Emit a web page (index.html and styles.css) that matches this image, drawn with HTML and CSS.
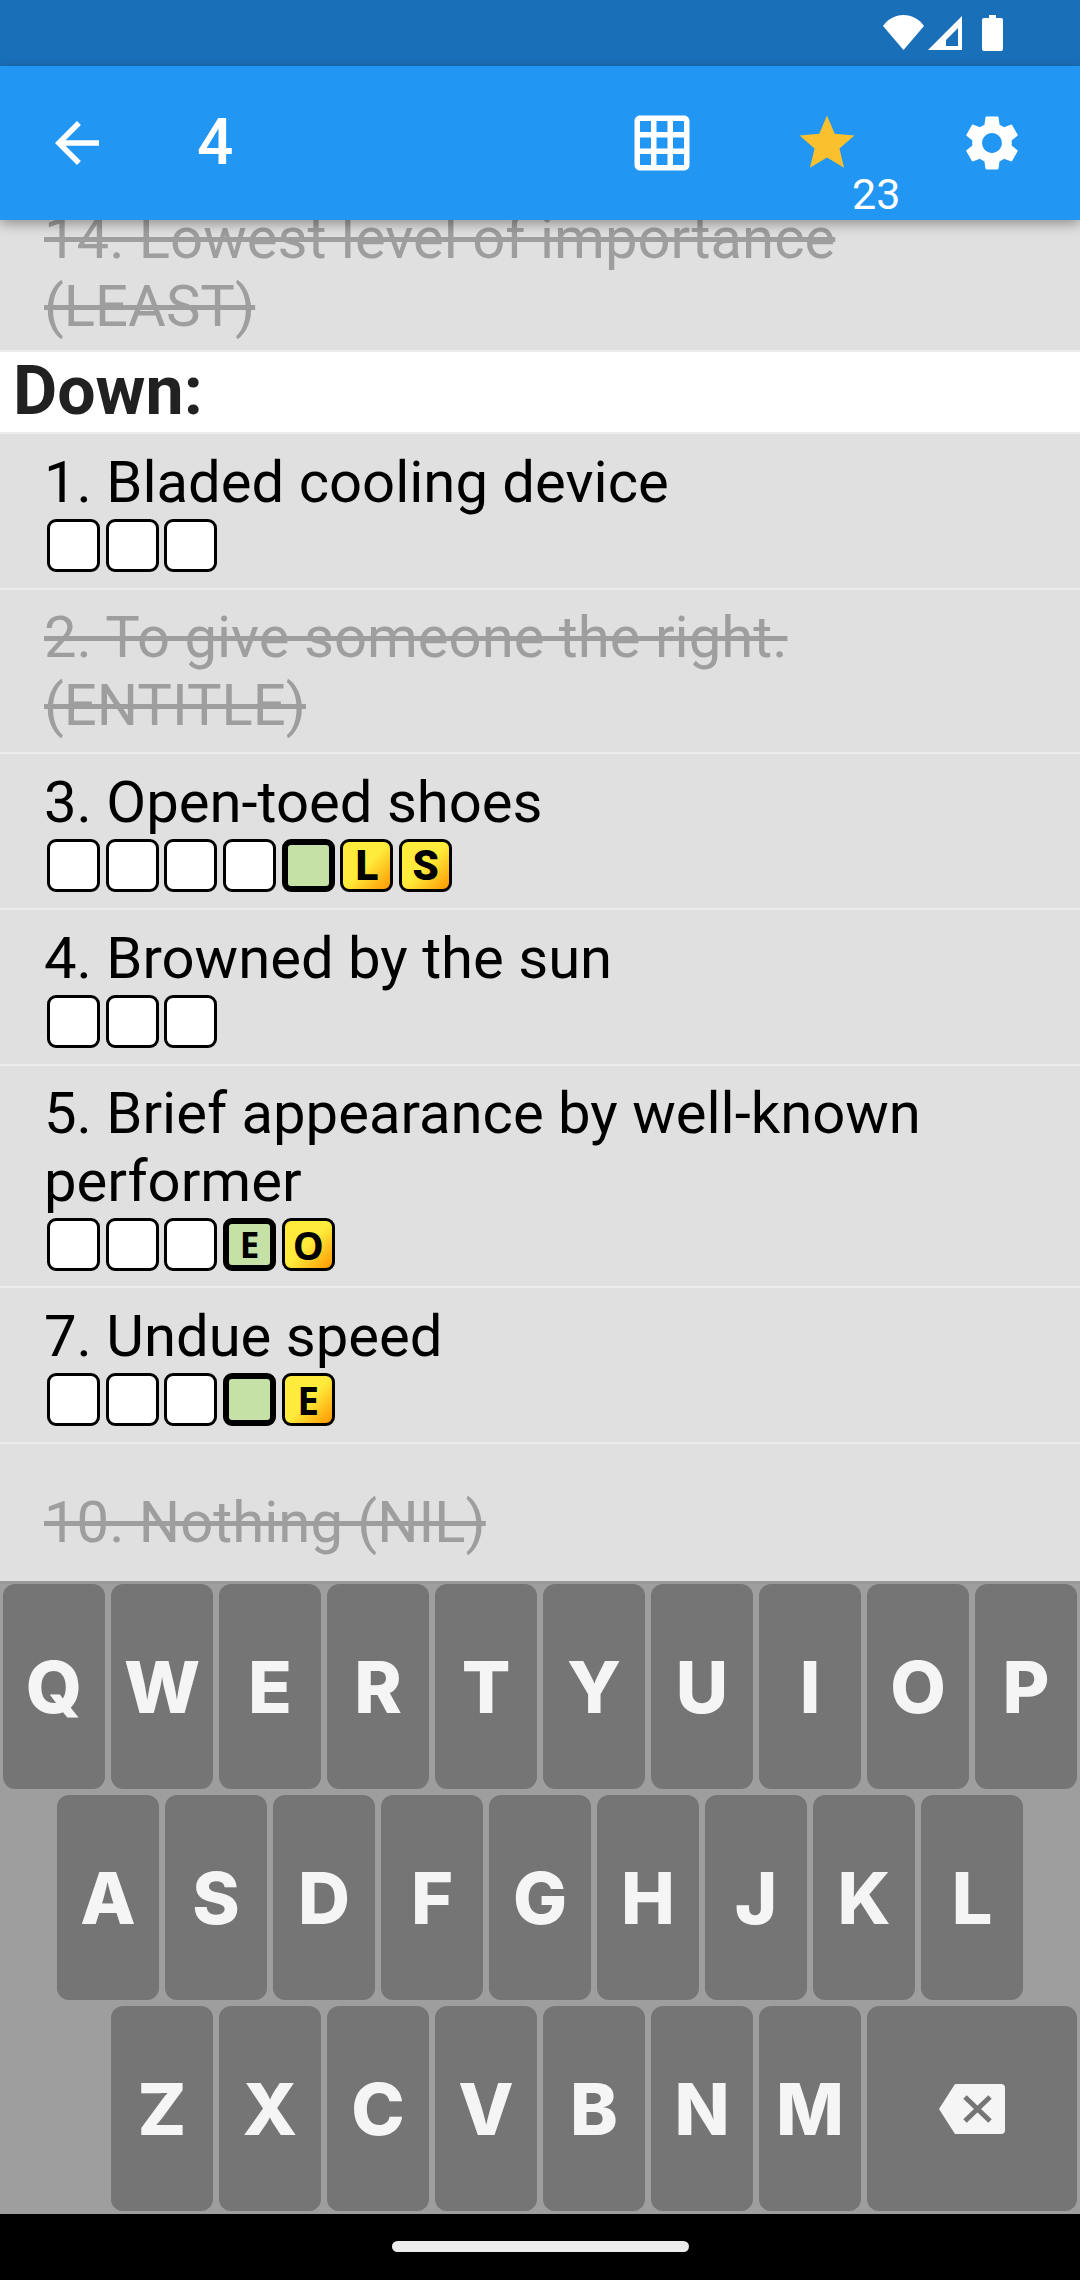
FILE: index.html
```html
<!DOCTYPE html>
<html lang="en">
<head>
    <meta charset="UTF-8">
    <meta name="viewport" content="width=device-width, initial-scale=1.0">
    <title>Crossword</title>
    <link rel="stylesheet" href="styles.css">
</head>
<body>

<div class="status-bar">
    <svg class="status-wifi" viewBox="0 0 41 35"><path d="M0 11C5 4 12 0 20.500 0S36 4 41 11L20.500 35Z"/></svg>
    <svg class="status-signal" viewBox="0 0 34 34"><path fill-rule="evenodd" d="M34 0V34H0ZM30 12L18 24V30H30Z"/></svg>
    <svg class="status-battery" viewBox="0 0 21 36"><path d="M7 0H14V3H19Q21 3 21 5V34Q21 36 19 36H2Q0 36 0 34V5Q0 3 2 3H7Z"/></svg>
</div>

<div class="app-bar">
    <div class="back-button">
        <svg class="icon" viewBox="0 0 24 24"><path d="M20 11H7.830l5.590-5.590L12 4l-8 8 8 8 1.410-1.410L7.830 13H20v-2z"/></svg>
    </div>
    <div class="app-title">4</div>
    <div class="action">
        <svg class="icon" viewBox="0 0 24 24"><path d="M20 2H4c-1.100 0-2 .9-2 2v16c0 1.100.9 2 2 2h16c1.100 0 2-.9 2-2V4c0-1.100-.9-2-2-2zM8 20H4v-4h4v4zm0-6H4v-4h4v4zm0-6H4V4h4v4zm6 12h-4v-4h4v4zm0-6h-4v-4h4v4zm0-6h-4V4h4v4zm6 12h-4v-4h4v4zm0-6h-4v-4h4v4zm0-6h-4V4h4v4z"/></svg>
    </div>
    <div class="action">
        <svg class="icon star" viewBox="0 0 24 24"><path d="M12 17.270L18.180 21l-1.640-7.030L22 9.240l-7.190-.61L12 2 9.190 8.630 2 9.240l5.460 4.730L5.820 21z"/></svg>
        <span class="badge">23</span>
    </div>
    <div class="action">
        <svg class="icon" viewBox="0 0 24 24"><path d="M19.140 12.940c.04-.3.060-.61.060-.94 0-.32-.02-.64-.07-.94l2.030-1.580c.18-.14.230-.41.120-.61l-1.920-3.320c-.12-.22-.37-.29-.59-.22l-2.390.96c-.5-.38-1.030-.7-1.620-.94l-.36-2.540c-.04-.24-.24-.41-.48-.41h-3.840c-.24 0-.43.170-.47.410l-.36 2.540c-.59.240-1.130.570-1.620.94l-2.390-.96c-.22-.08-.47 0-.59.220L2.740 8.870c-.12.210-.08.470.12.610l2.030 1.580c-.05.3-.09.630-.09.940s.02.640.07.940l-2.030 1.580c-.18.140-.23.410-.12.610l1.920 3.320c.12.220.37.290.59.220l2.390-.96c.5.380 1.030.7 1.620.94l.36 2.540c.05.240.24.410.48.410h3.840c.24 0 .44-.17.47-.41l.36-2.540c.59-.24 1.130-.56 1.620-.94l2.390.96c.22.080.47 0 .59-.22l1.920-3.320c.12-.22.070-.47-.12-.61l-2.010-1.580zM12 15.600c-1.980 0-3.600-1.620-3.600-3.600s1.620-3.600 3.600-3.600 3.600 1.620 3.600 3.600-1.620 3.600-3.600 3.600z"/></svg>
    </div>
</div>

<div class="clue-list">
    <div class="clue clue-clipped done"><span>14. Lowest level of importance<br>(LEAST)</span></div>
    <div class="section-title">Down:</div>

    <div class="clue">
        <div class="clue-text">1. Bladed cooling device</div>
        <div class="tiles">
            <div class="tile"></div><div class="tile"></div><div class="tile"></div>
        </div>
    </div>

    <div class="clue done"><span>2. To give someone the right.<br>(ENTITLE)</span></div>

    <div class="clue">
        <div class="clue-text">3. Open-toed shoes</div>
        <div class="tiles">
            <div class="tile"></div><div class="tile"></div><div class="tile"></div><div class="tile"></div>
            <div class="tile green"></div>
            <div class="tile yellow large">L</div>
            <div class="tile yellow large">S</div>
        </div>
    </div>

    <div class="clue">
        <div class="clue-text">4. Browned by the sun</div>
        <div class="tiles">
            <div class="tile"></div><div class="tile"></div><div class="tile"></div>
        </div>
    </div>

    <div class="clue clue-long">
        <div class="clue-text">5. Brief appearance by well-known performer</div>
        <div class="tiles">
            <div class="tile"></div><div class="tile"></div><div class="tile"></div>
            <div class="tile green">E</div>
            <div class="tile yellow">O</div>
        </div>
    </div>

    <div class="clue">
        <div class="clue-text">7. Undue speed</div>
        <div class="tiles">
            <div class="tile"></div><div class="tile"></div><div class="tile"></div>
            <div class="tile green"></div>
            <div class="tile yellow">E</div>
        </div>
    </div>

    <div class="clue clue-last done"><span>10. Nothing (NIL)</span></div>
</div>

<div class="keyboard">
    <div class="key-row">
        <div class="key">Q</div><div class="key">W</div><div class="key">E</div><div class="key">R</div><div class="key">T</div>
        <div class="key">Y</div><div class="key">U</div><div class="key">I</div><div class="key">O</div><div class="key">P</div>
    </div>
    <div class="key-row row-two">
        <div class="key">A</div><div class="key">S</div><div class="key">D</div><div class="key">F</div><div class="key">G</div>
        <div class="key">H</div><div class="key">J</div><div class="key">K</div><div class="key">L</div>
    </div>
    <div class="key-row row-three">
        <div class="key">Z</div><div class="key">X</div><div class="key">C</div><div class="key">V</div>
        <div class="key">B</div><div class="key">N</div><div class="key">M</div>
        <div class="key key-back">
            <svg class="back-icon" viewBox="0 0 66 50">
                <path class="back-shape" d="M16 0H62Q66 0 66 4V46Q66 50 62 50H16L0 25Z"/>
                <path class="back-cross" d="M26 13L51 37M51 13L26 37"/>
            </svg>
        </div>
    </div>
</div>

<div class="nav-bar"><div class="home-pill"></div></div>

</body>
</html>
```

FILE: styles.css
```css
* {
    box-sizing: border-box;
}

body {
    margin: 0;
    width: 1080px;
    height: 2280px;
    overflow: hidden;
    font-family: Roboto, sans-serif;
    background-color: #e0e0e0;
}

.status-bar {
    height: 66px;
    background-color: #1a6fb9;
    display: flex;
    align-items: flex-start;
    padding: 15px 0 0 883px;
}

.status-bar svg {
    fill: #fff;
    display: block;
}

.status-wifi {
    width: 41px;
    height: 35px;
}

.status-signal {
    width: 34px;
    height: 34px;
    margin: 1px 0 0 4px;
}

.status-battery {
    width: 21px;
    height: 36px;
    margin-left: 20px;
}

.app-bar {
    position: relative;
    z-index: 2;
    height: 154px;
    background-color: #2196f3;
    box-shadow: 0 4px 12px rgba(0, 0, 0, 0.35);
    display: flex;
    align-items: center;
    padding-right: 6px;
    color: #fff;
}

.icon {
    width: 66px;
    height: 66px;
    fill: #fff;
    display: block;
}

.icon.star {
    fill: #fbc02d;
}

.back-button {
    width: 197px;
    padding-left: 44px;
}

.app-title {
    flex: 1;
    font-size: 64px;
    font-weight: 500;
    line-height: 66px;
}

.action {
    position: relative;
    width: 165px;
    display: flex;
    justify-content: center;
}

.badge {
    position: absolute;
    left: 108px;
    top: 58px;
    font-size: 43px;
    line-height: 52px;
}

.clue-list {
    height: 1361px;
    overflow: hidden;
}

.clue {
    padding: 14px 40px 16px 44px;
    border-bottom: 2px solid #ececec;
    font-size: 58px;
    line-height: 68px;
    color: #000;
}

.clue.done {
    padding-top: 13px;
    padding-bottom: 13px;
    color: #9e9e9e;
}

.clue.done span {
    text-decoration: line-through;
}

.clue.clue-clipped {
    height: 132px;
    padding: 0 0 10px 44px;
    display: flex;
    align-items: flex-end;
}

.clue.clue-long {
    padding-top: 13px;
    padding-bottom: 15px;
}

.clue.clue-last {
    height: 137px;
    padding-top: 44px;
    border-bottom: none;
}

.section-title {
    height: 82px;
    background-color: #fff;
    border-bottom: 2px solid #ececec;
    padding-left: 13px;
    font-size: 68px;
    font-weight: 700;
    line-height: 78px;
    color: #212121;
}

.tiles {
    display: flex;
    gap: 5.700px;
    margin: 3px 0 0 3px;
}

.tile {
    width: 53px;
    height: 53px;
    border: 3px solid #000;
    border-radius: 9px;
    background-color: #fff;
    display: flex;
    align-items: center;
    justify-content: center;
    font-family: "Open Sans", sans-serif;
    font-size: 39px;
    font-weight: 700;
    line-height: 1;
}

.tile.green {
    border-width: 6px;
    background-color: #c5e1a5;
    font-size: 35px;
}

.tile.yellow {
    background: linear-gradient(135deg, #ffeb3b 0%, #ffeb3b 50%, #ff9800 100%);
}

.tile.large {
    font-family: Roboto, sans-serif;
    font-size: 42px;
    font-weight: 900;
}

.keyboard {
    height: 633px;
    background-color: #9e9e9e;
    border-top: 3px solid #999;
}

.key-row {
    display: flex;
    gap: 6px;
    padding: 0 3px;
    margin-bottom: 6px;
}

.key-row.row-two {
    padding-left: 57px;
}

.key-row.row-three {
    padding-left: 111px;
}

.key {
    width: 102px;
    height: 205px;
    border-radius: 12px;
    background-color: #757575;
    color: #f5f5f5;
    font-family: Inter, sans-serif;
    font-size: 72px;
    font-weight: 800;
    display: flex;
    align-items: center;
    justify-content: center;
}

.key-back {
    flex: 1;
}

.back-icon {
    width: 66px;
    height: 50px;
}

.back-shape {
    fill: #f5f5f5;
}

.back-cross {
    fill: none;
    stroke: #757575;
    stroke-width: 5;
}

.nav-bar {
    height: 66px;
    background-color: #000;
    display: flex;
    justify-content: center;
    padding-top: 27px;
}

.home-pill {
    width: 297px;
    height: 11px;
    border-radius: 6px;
    background-color: #ececec;
}
```
